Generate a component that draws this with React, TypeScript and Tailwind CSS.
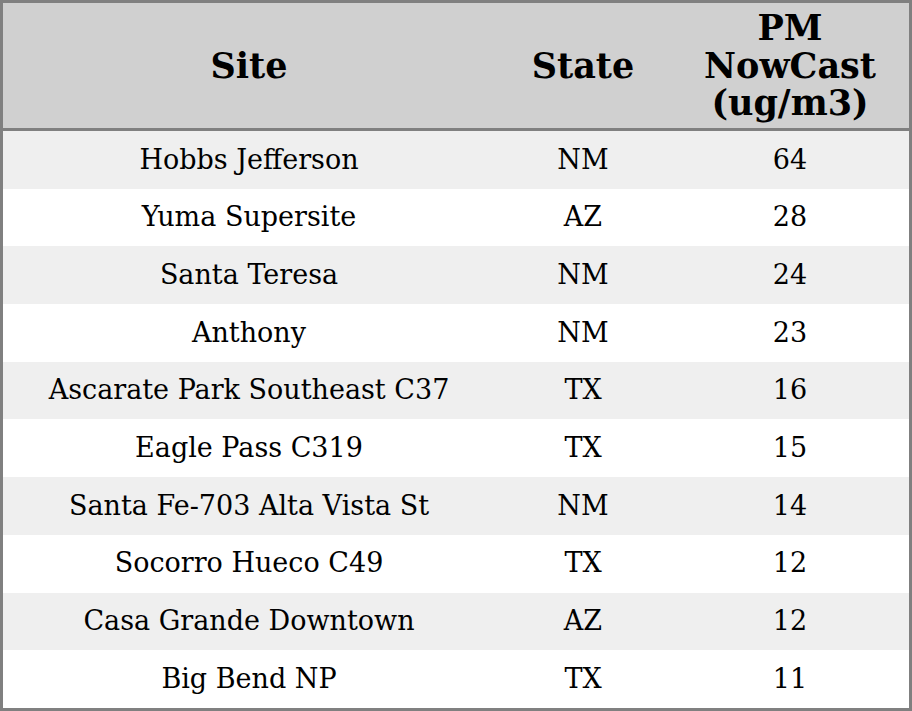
const rows = [
  { site: 'Hobbs Jefferson', state: 'NM', pm: 64 },
  { site: 'Yuma Supersite', state: 'AZ', pm: 28 },
  { site: 'Santa Teresa', state: 'NM', pm: 24 },
  { site: 'Anthony', state: 'NM', pm: 23 },
  { site: 'Ascarate Park Southeast C37', state: 'TX', pm: 16 },
  { site: 'Eagle Pass C319', state: 'TX', pm: 15 },
  { site: 'Santa Fe-703 Alta Vista St', state: 'NM', pm: 14 },
  { site: 'Socorro Hueco C49', state: 'TX', pm: 12 },
  { site: 'Casa Grande Downtown', state: 'AZ', pm: 12 },
  { site: 'Big Bend NP', state: 'TX', pm: 11 },
];

export default function App() {
  return (
    <div className="w-[912px] h-[711px] bg-white font-['DejaVu_Serif',serif] text-black">
      <table className="w-[912px] table-fixed border-separate border-spacing-0 border-[3px] border-[#808080]">
        <colgroup>
          <col className="w-[492px]" />
          <col className="w-[176px]" />
          <col className="w-[238px]" />
        </colgroup>
        <thead>
          <tr className="bg-[#d0d0d0] h-[128px]">
            <th className="border-b-[3px] border-[#808080] text-[35px] leading-[37.5px] font-bold text-center align-middle">Site</th>
            <th className="border-b-[3px] border-[#808080] text-[35px] leading-[37.5px] font-bold text-center align-middle">State</th>
            <th className="border-b-[3px] border-[#808080] text-[35px] leading-[37.5px] font-bold text-center align-middle">
              PM<br />NowCast<br />(ug/m3)
            </th>
          </tr>
        </thead>
        <tbody>
          {rows.map((r, i) => (
            <tr key={r.site} className={`h-[57.7px] ${i % 2 === 0 ? 'bg-[#efefef]' : 'bg-white'}`}>
              <td className="text-center text-[27px] align-middle">{r.site}</td>
              <td className="text-center text-[27px] align-middle">{r.state}</td>
              <td className="text-center text-[27px] align-middle">{r.pm}</td>
            </tr>
          ))}
        </tbody>
      </table>
    </div>
  );
}
